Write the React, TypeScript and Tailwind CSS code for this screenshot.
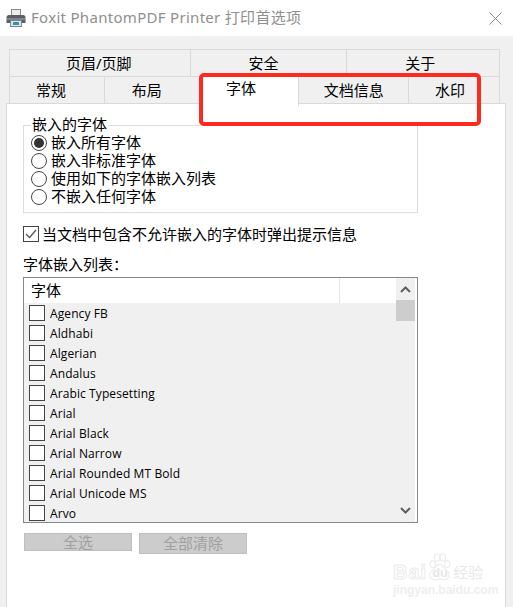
const cjk = "font-['Noto_Sans','Noto_Sans_CJK_SC',sans-serif]";

const fonts = [
  'Agency FB',
  'Aldhabi',
  'Algerian',
  'Andalus',
  'Arabic Typesetting',
  'Arial',
  'Arial Black',
  'Arial Narrow',
  'Arial Rounded MT Bold',
  'Arial Unicode MS',
  'Arvo',
];

const embedOptions = ['嵌入所有字体', '嵌入非标准字体', '使用如下的字体嵌入列表', '不嵌入任何字体'];

const PrinterIcon = () => (
  <svg width="20" height="20" viewBox="0 0 20 20">
    <rect x="5.5" y="1.5" width="9" height="6" fill="#ececec" stroke="#8a8a8a" />
    <path d="M0.5 10 Q0.5 7 3 7 H17 Q19.5 7 19.5 10 V15 H0.5 Z" fill="#5a5f63" />
    <rect x="1" y="10" width="18" height="2" fill="#80858a" />
    <rect x="4.5" y="12.5" width="11" height="6" fill="#dfe6ea" stroke="#7d8488" />
    <rect x="7" y="14" width="6" height="3" fill="#3f8fb0" />
  </svg>
);

const Radio = ({ checked, label }: { checked?: boolean; label: string }) => (
  <div className="flex h-[18px] items-center">
    <span className="flex h-[16px] w-[16px] shrink-0 items-center justify-center rounded-full border border-[#444] bg-white">
      {checked && <span className="h-[10px] w-[10px] rounded-full bg-[#333]" />}
    </span>
    <span className="ml-[4px] font-['Liberation_Sans','Noto_Sans_CJK_SC',sans-serif] text-[15px] leading-[18px] text-black">{label}</span>
  </div>
);

const TabLabel = ({ width, text, pad = '' }: { width: string; text: string; pad?: string }) => (
  <div className={`flex h-[27px] items-center justify-center border-r border-t border-[#d9d9d9] bg-[#f0f0f0] pt-[1px] text-[15px] text-black ${width} ${pad}`}>
    {text}
  </div>
);

const Watermark = () => (
  <div className="absolute left-[393px] top-[552px] flex w-[96px] flex-col">
    <div className="flex h-[30px] items-end whitespace-nowrap">
      <span className="font-['Liberation_Sans',sans-serif] text-[20px] leading-[20px] font-bold tracking-[1px] text-white [-webkit-text-stroke:1px_#ececec]">Bai</span>
      <div className="relative h-[30px] w-[25px] shrink-0">
        <svg width="25" height="30" viewBox="0 0 26 30" fill="white" stroke="#ececec" strokeWidth="1.2">
          <ellipse cx="6" cy="12" rx="2.8" ry="3.6" />
          <ellipse cx="10.5" cy="5" rx="2.8" ry="3.8" />
          <ellipse cx="16.5" cy="5" rx="2.8" ry="3.8" />
          <ellipse cx="21" cy="12" rx="2.8" ry="3.6" />
          <path d="M13 12 C9 12 9 17 5 19 C1 22 3 29 9 28 C11 27.6 15 27.6 17 28 C23 29 25 22 21 19 C17 17 17 12 13 12 Z" />
        </svg>
        <span className="absolute bottom-[2px] left-[5px] font-['Liberation_Sans',sans-serif] text-[13px] leading-[15px] font-bold text-[#e8e8e8]">du</span>
      </div>
      <span className="ml-[1px] shrink-0 font-['Noto_Sans_CJK_SC',sans-serif] text-[15px] leading-[20px] text-[#e8e8e8]">经验</span>
    </div>
    <div className="mt-[2px] font-['Liberation_Sans',sans-serif] text-[12px] leading-[13px] font-bold whitespace-nowrap text-[#eeeeee]">jingyan.baidu.com</div>
  </div>
);

export default function App() {
  return (
    <div className={`relative flex h-[607px] w-[513px] flex-col overflow-hidden bg-[#f0f0f0] ${cjk}`}>
      {/* title bar */}
      <div className="flex h-[36px] shrink-0 items-center bg-white pl-[6px] pr-[11px]">
        <PrinterIcon />
        <span className="mb-[2px] ml-[5px] text-[15px] tracking-[0.3px] text-[#8f8f8f]">Foxit PhantomPDF Printer 打印首选项</span>
        <svg className="ml-auto" width="13" height="13" viewBox="0 0 13 13" stroke="#8a8a8a" strokeWidth="1">
          <path d="M0.5 0.5 L12.5 12.5 M12.5 0.5 L0.5 12.5" />
        </svg>
      </div>

      {/* tabs */}
      <div className="ml-[9px] mt-[13px] flex w-[491px] border-l border-[#d9d9d9]">
        <TabLabel width="w-[181px]" text="页眉/页脚" pad="pr-[2px]" />
        <TabLabel width="w-[157px]" text="安全" pad="pr-[10px]" />
        <TabLabel width="w-[153px]" text="关于" pad="pr-[6px]" />
      </div>
      <div className="relative z-10 ml-[9px] flex h-[27px] w-[491px] border-l border-[#d9d9d9]">
        <TabLabel width="w-[95px]" text="常规" pad="pr-[12px]" />
        <TabLabel width="w-[95px]" text="布局" pad="pr-[10px]" />
        <div className="flex h-[30px] w-[100px] justify-center border-r border-[#d9d9d9] bg-white pr-[16px] text-[15px] leading-[24px] text-black">字体</div>
        <TabLabel width="w-[110px]" text="文档信息" />
        <TabLabel width="w-[91px]" text="水印" pad="pr-[8px]" />
      </div>

      {/* panel */}
      <div className="ml-[6px] flex w-[500px] flex-1 flex-col border-l border-r border-t border-[#d9d9d9] bg-white pl-[16px]">
        <fieldset className="mt-[13px] h-[96px] w-[395px] border border-[#dcdcdc] pl-[7px]">
          <legend className="h-[16px] px-[1px] text-[15px] leading-[15px] text-black">嵌入的字体</legend>
          <div className="mt-[1px]">
            {embedOptions.map((o, i) => (
              <Radio key={o} label={o} checked={i === 0} />
            ))}
          </div>
        </fieldset>

        <div className="mt-[13px] flex h-[16px] items-center">
          <span className="flex h-[16px] w-[16px] items-center justify-center border border-[#444] bg-white">
            <svg width="12" height="10" viewBox="0 0 12 10" fill="none" stroke="#555" strokeWidth="1.3">
              <path d="M1 5 L4.5 8.5 L11 1" />
            </svg>
          </span>
          <span className="ml-[3px] text-[15px] text-black">当文档中包含不允许嵌入的字体时弹出提示信息</span>
        </div>

        <div className="mt-[12px] h-[20px] text-[15px] leading-[20px] text-black">字体嵌入列表：</div>

        {/* font list */}
        <div className="mt-[3px] flex h-[246px] w-[395px] flex-col border border-[#828790] bg-white">
          <div className="flex h-[25px] shrink-0">
            <div className="flex h-full w-[316px] items-center border-r border-[#e5e5e5] pl-[7px] text-[15px] text-black">字体</div>
          </div>
          <div className="flex min-h-0 flex-1">
            <div className="flex w-[372px] flex-col overflow-hidden bg-[#f0f0f0]">
              {fonts.map(f => (
                <div key={f} className="flex h-[20px] shrink-0 items-center pl-[5px]">
                  <span className="h-[16px] w-[16px] shrink-0 border border-[#444] bg-white" />
                  <span className="ml-[5px] pt-[1px] font-['Open_Sans',sans-serif] text-[12px] tracking-[0.1px] text-black">{f}</span>
                </div>
              ))}
            </div>
          </div>
        </div>

        <div className="ml-[1px] mt-[10px] flex items-start gap-[7px]">
          <div className="flex h-[18px] w-[108px] items-center justify-center border border-[#bfbfbf] bg-[#cccccc] text-[15px] text-[#a0a0a0]">全选</div>
          <div className="flex h-[21px] w-[108px] items-center justify-center border border-[#bfbfbf] bg-[#cccccc] text-[15px] text-[#a0a0a0]">全部清除</div>
        </div>
      </div>

      {/* scrollbar of the list */}
      <div className="absolute left-[396px] top-[278px] flex h-[244px] w-[19px] flex-col items-center bg-[#f0f0f0]">
        <svg className="mt-[8px]" width="11" height="7" viewBox="0 0 11 7" fill="none" stroke="#606060" strokeWidth="2">
          <path d="M1 6 L5.5 1.5 L10 6" />
        </svg>
        <div className="mt-[7px] h-[21px] w-[19px] bg-[#cdcdcd]" />
        <svg className="mb-[8px] mt-auto" width="11" height="7" viewBox="0 0 11 7" fill="none" stroke="#606060" strokeWidth="2">
          <path d="M1 1 L5.5 5.5 L10 1" />
        </svg>
      </div>

      {/* red annotation */}
      <div className="pointer-events-none absolute left-[199px] top-[73px] z-20 h-[53px] w-[282px] rounded-[5px] border-[4px] border-[#ff2a1f]" />

      <Watermark />
    </div>
  );
}
